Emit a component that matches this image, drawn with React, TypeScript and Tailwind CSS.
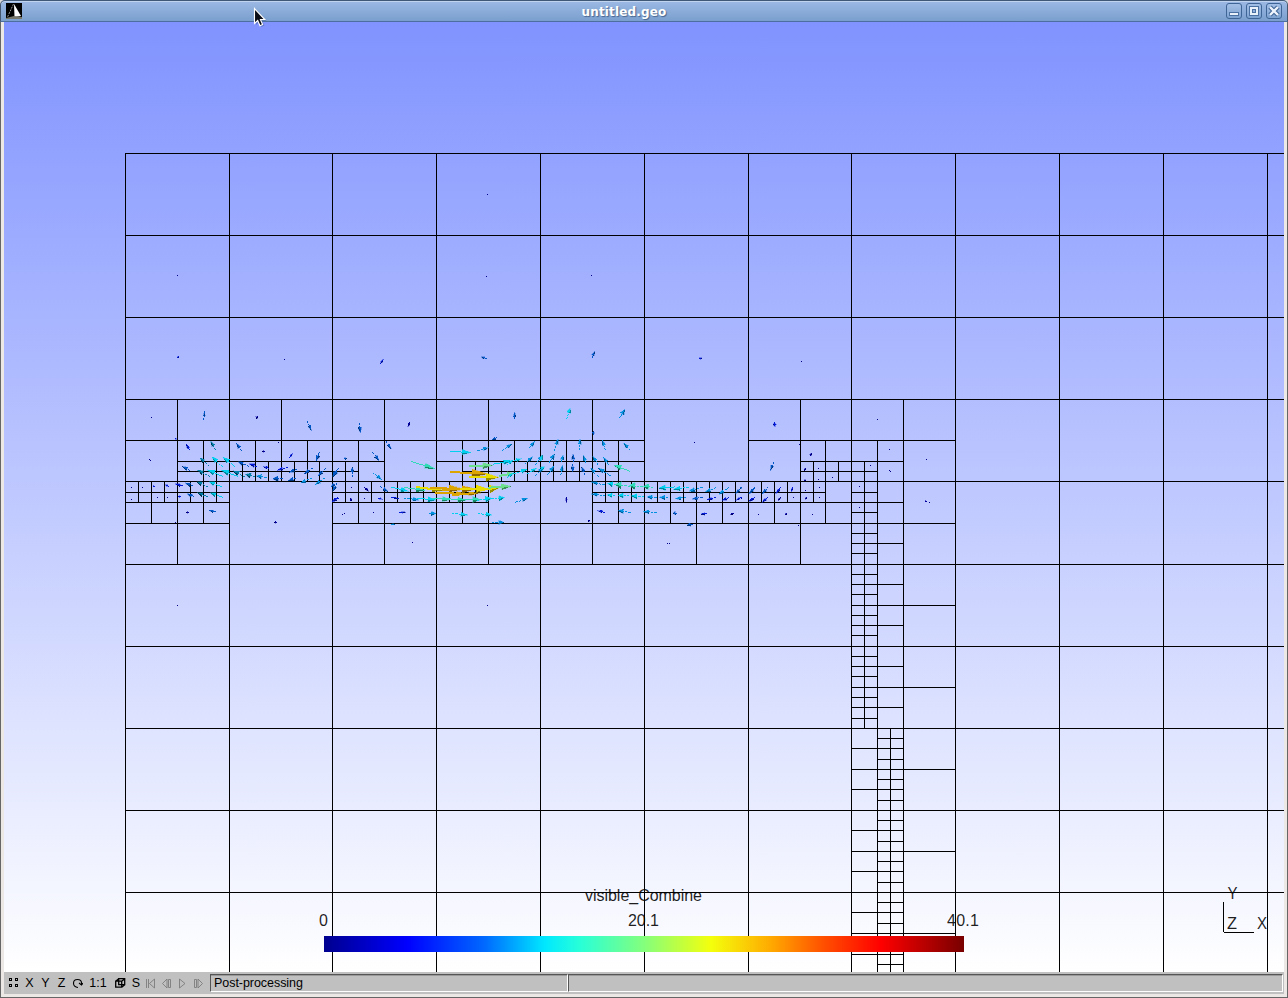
import React from "react";

// Mesh lines: [fixed coordinate, from, to]
const V: number[][] = [
  ...[125, 229, 332, 436, 540, 644, 748, 851, 955, 1059, 1163, 1267].map((x) => [x, 153, 972]),
  [138, 481, 502], [151, 481, 523], [164, 481, 502], [177, 399, 564], [190, 481, 502], [203, 440, 523], [216, 461, 502],
  [242, 461, 481], [255, 440, 481], [268, 461, 481], [281, 399, 481], [294, 461, 481], [307, 440, 481], [319, 461, 481],
  [345, 461, 502], [358, 440, 523], [371, 481, 502], [384, 399, 564], [397, 481, 502], [410, 481, 523], [423, 481, 502],
  [449, 481, 502], [462, 440, 523], [475, 461, 502], [488, 399, 564], [501, 461, 481], [514, 440, 481], [527, 461, 481],
  [553, 461, 481], [566, 440, 481], [579, 461, 481], [592, 399, 564], [605, 461, 502], [618, 440, 523], [631, 481, 502],
  [657, 481, 502], [670, 481, 523], [683, 481, 502], [696, 481, 564], [709, 481, 502], [722, 481, 523], [735, 481, 502],
  [761, 481, 502], [774, 481, 523], [787, 481, 502], [800, 399, 564], [813, 461, 502], [825, 440, 523], [838, 461, 481],
  [864, 461, 728], [877, 440, 972], [890, 728, 972], [903, 399, 972],
];

const H: number[][] = [
  ...[153, 235, 317, 399, 481, 564, 646, 728, 810, 892].map((y) => [y, 125, 1284]),
  [440, 125, 644], [440, 748, 955],
  [461, 177, 384], [461, 436, 644], [461, 800, 903],
  [471, 177, 358], [471, 462, 618], [471, 800, 877],
  [492, 125, 229], [492, 332, 488], [492, 592, 825], [492, 851, 877],
  [502, 125, 229], [502, 332, 488], [502, 592, 903],
  [523, 125, 229], [523, 332, 955],
  ...[512, 533, 553, 574, 594, 615, 635, 656, 676, 697, 718].map((y) => [y, 851, 877]),
  ...[543, 584, 625, 666, 707, 748, 789, 830, 871, 912, 954].map((y) => [y, 851, 903]),
  ...[605, 687].map((y) => [y, 851, 955]),
  ...[769, 851, 933].map((y) => [y, 851, 955]),
  ...[738, 759, 779, 800, 820, 841, 861, 882, 902, 923, 943, 964].map((y) => [y, 877, 903]),
];

const meshPath =
  V.map(([x, a, b]) => `M${x} ${a}h1v${b - a + 1}h-1z`).join("") +
  H.map(([y, a, b]) => `M${a} ${y}h${b - a + 1}v1h${a - b - 1}z`).join("");

const COLORS = ["#00009c", "#0018d8", "#0058c8", "#0090e0", "#00d0f0", "#30dcb8", "#6ce08c", "#e8dc00", "#dca400", "#0080a8"];
const SHADES = ["#000060", "#001080", "#003880", "#005c98", "#00889c", "#168868", "#3c9058", "#988c00", "#8c6400", "#003c58"];

// Vector glyphs in thirds of a pixel: tail x, tail y, tip x, tip y, colour, head half-width
type Tile = { x: number; y: number; glyphs: number[][] };
const TILES: Tile[] = [
  {
    x: 120, y: 390,
    glyphs: [
      [251, 90, 254, 62, 2, 2], [562, 94, 574, 122, 2, 3], [209, 180, 198, 162, 1, 3], [287, 179, 272, 153, 9, 4],
      [365, 182, 349, 160, 2, 4], [508, 204, 518, 189, 1, 2], [598, 187, 589, 213, 2, 4], [268, 229, 239, 203, 9, 4],
      [308, 231, 275, 200, 4, 5], [346, 230, 309, 202, 4, 5], [386, 229, 353, 215, 2, 4], [412, 230, 388, 222, 1, 4],
      [446, 235, 430, 230, 1, 3], [504, 231, 472, 241, 1, 4], [532, 236, 508, 248, 2, 4], [578, 234, 552, 252, 2, 4],
      [616, 235, 594, 258, 2, 4], [650, 240, 638, 260, 2, 4], [210, 242, 187, 229, 2, 4], [270, 260, 232, 240, 9, 5],
      [310, 260, 262, 240, 4, 6], [355, 260, 304, 241, 4, 6], [376, 262, 340, 243, 9, 6], [406, 261, 376, 253, 9, 6],
      [440, 262, 408, 258, 3, 5], [488, 265, 458, 267, 2, 6], [528, 264, 504, 272, 2, 4], [576, 264, 542, 279, 3, 4],
      [614, 264, 586, 284, 3, 4], [652, 278, 638, 305, 2, 4], [188, 288, 165, 282, 1, 3], [220, 289, 196, 279, 2, 4],
      [264, 290, 230, 276, 9, 5], [305, 290, 266, 275, 4, 5], [223, 320, 201, 312, 2, 4], [263, 320, 232, 308, 9, 5],
      [308, 322, 270, 308, 4, 5], [184, 320, 173, 319, 1, 2], [287, 366, 266, 361, 2, 3], [146, 289, 136, 285, 1, 2],
      [654, 322, 636, 336, 1, 4], [104, 289, 98, 289, 1, 2], [207, 367, 198, 367, 0, 2], [435, 184, 426, 184, 0, 2],
      [413, 78, 409, 86, 0, 3], [470, 397, 462, 397, 0, 2], [168, 143, 168, 151, 1, 2],
    ],
  },
  {
    x: 330, y: 390,
    glyphs: [
      [88, 99, 91, 128, 2, 4], [241, 95, 233, 112, 0, 2], [554, 88, 554, 66, 2, 3], [167, 153, 184, 178, 2, 3],
      [502, 142, 486, 149, 2, 4], [128, 187, 147, 212, 2, 4], [42, 207, 50, 205, 2, 3], [128, 247, 155, 269, 3, 4],
      [26, 234, 10, 260, 2, 4], [67, 262, 67, 230, 2, 4], [16, 280, 4, 290, 2, 4],
      [243, 214, 316, 237, 5, 6], [360, 184, 423, 188, 4, 6], [442, 182, 476, 173, 3, 4], [516, 181, 546, 162, 3, 4],
      [598, 175, 614, 154, 3, 4], [418, 229, 488, 226, 6, 7], [360, 246, 474, 252, 8, 9], [418, 261, 506, 262, 7, 9],
      [488, 223, 545, 212, 4, 5], [506, 258, 552, 250, 6, 6], [552, 213, 575, 206, 4, 4], [552, 251, 592, 238, 4, 5],
      [584, 222, 608, 200, 3, 4], [616, 224, 638, 196, 3, 5], [530, 226, 550, 210, 4, 3], [592, 252, 620, 234, 4, 4],
      [616, 257, 640, 232, 3, 4], [530, 264, 552, 248, 4, 3],
      [60, 334, 66, 326, 0, 2], [103, 292, 117, 304, 0, 3], [150, 290, 174, 305, 2, 4], [183, 291, 236, 304, 4, 5],
      [222, 292, 286, 302, 5, 6], [258, 291, 342, 302, 7, 6], [300, 293, 400, 298, 8, 8], [336, 299, 440, 297, 8, 8],
      [316, 309, 425, 312, 8, 4], [366, 315, 452, 309, 8, 4], [390, 296, 474, 297, 7, 9], [440, 302, 508, 293, 7, 9],
      [474, 293, 544, 289, 6, 7], [144, 324, 158, 328, 1, 2], [184, 323, 208, 326, 1, 2], [222, 324, 268, 330, 3, 4],
      [262, 325, 318, 330, 4, 6], [306, 324, 360, 329, 5, 6], [350, 326, 408, 331, 5, 6], [396, 328, 452, 329, 5, 7],
      [440, 331, 486, 325, 4, 7], [484, 327, 524, 323, 4, 6], [26, 324, 6, 334, 1, 4], [556, 337, 593, 325, 3, 4],
      [297, 370, 318, 371, 3, 5], [366, 370, 413, 375, 4, 5], [444, 371, 486, 375, 4, 5], [208, 367, 228, 367, 1, 2],
      [486, 398, 522, 397, 3, 5], [184, 403, 195, 403, 3, 2],
    ],
  },
  {
    x: 540, y: 390,
    glyphs: [
      [80, 88, 91, 53, 4, 5], [238, 85, 255, 58, 3, 5], [160, 134, 160, 123, 2, 3], [43, 184, 54, 147, 3, 4],
      [119, 181, 120, 146, 3, 4], [196, 181, 187, 150, 3, 4], [271, 181, 251, 159, 3, 4], [0, 214, 8, 194, 4, 4],
      [26, 220, 44, 192, 3, 5], [64, 216, 70, 194, 3, 4], [100, 216, 99, 192, 2, 4], [138, 220, 130, 196, 3, 4],
      [174, 224, 158, 198, 3, 4], [208, 226, 190, 202, 3, 4], [271, 244, 222, 226, 5, 6], [0, 240, 14, 230, 4, 5],
      [22, 256, 42, 228, 3, 5], [62, 256, 68, 226, 3, 4], [98, 222, 98, 246, 2, 4], [136, 256, 124, 230, 2, 4],
      [176, 260, 152, 234, 3, 4], [214, 259, 174, 234, 3, 5], [194, 285, 154, 276, 3, 4], [238, 287, 202, 280, 4, 6],
      [270, 289, 224, 283, 5, 8], [308, 291, 268, 286, 5, 8], [340, 292, 310, 289, 5, 7], [404, 291, 356, 295, 4, 6],
      [446, 292, 400, 298, 4, 5], [488, 292, 446, 304, 3, 5], [528, 293, 496, 306, 3, 4], [568, 292, 536, 313, 3, 4],
      [606, 292, 586, 312, 2, 3], [644, 294, 628, 312, 2, 3], [196, 317, 154, 312, 3, 4], [226, 317, 200, 315, 4, 5],
      [268, 318, 234, 316, 4, 6], [312, 320, 274, 318, 4, 6], [350, 322, 320, 321, 3, 5], [384, 323, 358, 322, 3, 5],
      [438, 322, 406, 326, 3, 4], [488, 322, 456, 327, 2, 4], [528, 322, 500, 330, 1, 3], [566, 323, 545, 332, 1, 3],
      [606, 321, 586, 332, 1, 2], [644, 322, 630, 334, 1, 2], [194, 367, 172, 362, 1, 3], [272, 367, 234, 362, 3, 5],
      [350, 367, 309, 365, 3, 4], [411, 369, 398, 370, 2, 4], [501, 371, 482, 373, 1, 3], [582, 371, 570, 373, 0, 2],
      [458, 402, 440, 406, 2, 4], [79, 320, 79, 338, 0, 2], [144, 391, 150, 394, 0, 2],
    ],
  },
  {
    x: 740, y: 390,
    glyphs: [
      [103, 96, 104, 110, 1, 4], [101, 216, 91, 242, 2, 3], [214, 189, 211, 198, 0, 3], [46, 291, 26, 312, 2, 3],
      [86, 290, 66, 312, 2, 3], [124, 290, 107, 312, 1, 3], [160, 290, 153, 306, 1, 2], [84, 321, 66, 338, 1, 3],
      [44, 322, 26, 334, 1, 3], [122, 321, 114, 332, 0, 2], [199, 322, 196, 328, 0, 2], [4, 291, 0, 296, 2, 2],
      [141, 370, 135, 375, 0, 2], [555, 334, 561, 335, 0, 2], [197, 234, 192, 243, 0, 2], [192, 271, 198, 271, 0, 2],
    ],
  },
  {
    x: 0, y: 0,
    glyphs: [
      [533, 1074, 536, 1069, 1, 2], [1139, 1093, 1151, 1077, 1, 2], [1460, 1076, 1442, 1070, 2, 3],
      [1776, 1073, 1785, 1053, 2, 3], [2096, 1075, 2107, 1075, 1, 2],
    ],
  },
];

// Vectors too short to show a direction
const DOTS: number[][] = [
  [487, 194], [177, 275], [486, 276], [591, 275], [284, 359], [801, 361], [151, 417], [149, 459], [150, 460], [278, 442],
  [131, 487], [142, 487], [131, 499], [157, 497], [167, 497], [175, 522], [177, 605], [487, 605], [412, 542], [342, 514],
  [344, 513], [373, 512], [351, 487], [364, 498], [350, 498], [694, 442], [667, 543], [669, 543], [758, 514], [812, 514],
  [799, 444], [877, 419], [889, 449], [889, 470], [890, 471], [926, 459], [929, 502], [832, 477], [870, 465], [859, 486],
  [859, 507], [798, 525], [818, 468], [818, 479], [819, 487], [819, 497], [805, 490], [793, 497], [780, 497], [741, 498],
];

function Glyph({ g }: { g: number[] }) {
  const [x1, y1, x2, y2, c, half] = g;
  const w = half * 1.25 + 0.4;
  const dx = x2 - x1;
  const dy = y2 - y1;
  const len = Math.hypot(dx, dy) || 1;
  const ux = dx / len;
  const uy = dy / len;
  const head = Math.min(len * 0.65, Math.max(len * 0.42, 16));
  const bx = x2 - ux * head;
  const by = y2 - uy * head;
  // Unit normal turned to the lower, unlit side of the cone
  const side = ux >= 0 ? 1 : -1;
  const nx = -uy * w * side;
  const ny = ux * w * side;
  const strong = c >= 6 && c <= 8;
  return (
    <g>
      <path
        d={`M${x1} ${y1}L${bx} ${by}`}
        stroke={COLORS[c]}
        strokeWidth={strong ? 6 : 3}
        strokeDasharray={len < 48 && !strong ? "7 3" : undefined}
      />
      <path d={`M${bx + nx} ${by + ny}L${x2} ${y2}L${bx - nx} ${by - ny}z`} fill={COLORS[c]} stroke={COLORS[c]} strokeWidth="1" />
      <path d={`M${bx + nx * 0.3} ${by + ny * 0.3}L${x2} ${y2}L${bx + nx} ${by + ny}z`} fill={SHADES[c]} />
    </g>
  );
}

function Viewport() {
  return (
    <svg
      className="block h-[950px] w-[1280px] shrink-0"
      viewBox="4 22 1280 950"
      fontFamily="'Liberation Sans', Arial, sans-serif"
      fontSize="16"
    >
      <defs>
        <linearGradient id="sky" x1="0" y1="0" x2="0" y2="1">
          <stop offset="0" stopColor="#8093ff" />
          <stop offset="1" stopColor="#ffffff" />
        </linearGradient>
        <linearGradient id="jet">
          <stop offset="0" stopColor="#00008f" />
          <stop offset=".13" stopColor="#0000ff" />
          <stop offset=".25" stopColor="#0068ff" />
          <stop offset=".345" stopColor="#00e8ff" />
          <stop offset=".4" stopColor="#28ffd8" />
          <stop offset=".5" stopColor="#84ff7c" />
          <stop offset=".605" stopColor="#f4ff0c" />
          <stop offset=".7" stopColor="#ffa800" />
          <stop offset=".78" stopColor="#ff5000" />
          <stop offset=".87" stopColor="#ff0000" />
          <stop offset="1" stopColor="#780000" />
        </linearGradient>
      </defs>
      <rect x="4" y="22" width="1280" height="950" fill="url(#sky)" />
      <g shapeRendering="crispEdges">
        <path d={meshPath} fill="#000000" />
        {TILES.map((t, i) => (
          <g key={i} transform={`translate(${t.x} ${t.y}) scale(.33333)`} fill="none">
            {t.glyphs.map((g, j) => (
              <Glyph key={j} g={g} />
            ))}
          </g>
        ))}
        <path d={DOTS.map(([x, y]) => `M${x} ${y}h1v1h-1z`).join("")} fill="#000088" />
        <rect x="324" y="936" width="640" height="16" fill="url(#jet)" />
        <path d="M1223 902h1v30h-1zM1224 932h30v1h-30z" fill="#000" />
      </g>
      <g fill="#000" fillOpacity=".88">
        <text x="585" y="901" textLength="117">visible_Combine</text>
        <text x="319" y="926">0</text>
        <text x="628" y="926" textLength="31">20.1</text>
        <text x="947" y="926" textLength="32">40.1</text>
        <text x="1227.500" y="899" textLength="10" lengthAdjust="spacingAndGlyphs">Y</text>
        <text x="1227" y="929" textLength="10" lengthAdjust="spacingAndGlyphs">Z</text>
        <text x="1257" y="929" textLength="10" lengthAdjust="spacingAndGlyphs">X</text>
      </g>
    </svg>
  );
}

function WindowButton({ children }: { children: React.ReactNode }) {
  return (
    <button className="flex h-4 w-4 items-center justify-center rounded-[3px] border border-[#3f6596] bg-linear-to-b from-[#a3bfe6] to-[#7da2d0]">
      <svg width="14" height="14" viewBox="0 0 14 14" fill="none" shapeRendering="crispEdges">
        {children}
      </svg>
    </button>
  );
}

function TitleBar() {
  return (
    <header className="relative flex h-[22px] shrink-0 items-center justify-between rounded-t-[5px] border border-b-[#4c6f9f] border-x-[#46586f] border-t-[#3f5878] bg-linear-to-b from-[#9cb9e4] to-[#7a9fce] px-[5px] shadow-[inset_0_1px_0_#c0d4f0]">
      <svg width="16" height="16" viewBox="0 0 16 16">
        <path d="M0 0h16v16H0z" fill="#000" />
        <path d="M8 1L15 13L8.500 14z" fill="#fff" />
        <path d="M0 15L8 13L16 14V16H0z" fill="#77776c" />
        <path d="M7.500 1L1.500 14" stroke="#999" strokeDasharray="2 1" fill="none" />
      </svg>
      <h1 className="absolute inset-x-0 top-[3px] pr-[40px] text-center font-['DejaVu_Sans',sans-serif] text-[12px] leading-4 font-bold tracking-[0.17px] text-white [text-shadow:1px_1px_1px_#47658f]">
        untitled.geo
      </h1>
      <div className="relative flex gap-1">
        <WindowButton>
          <path d="M2 8h10v4H2z" fill="#4b71a3" />
          <path d="M3 9h8v2H3z" fill="#e8f0fa" />
        </WindowButton>
        <WindowButton>
          <path d="M2 2h10v10H2z" fill="#4b71a3" />
          <path d="M3 3h8v8H3z" fill="#e8f0fa" />
          <path d="M5 5h4v4H5z" fill="#4b71a3" />
          <path d="M6 6h2v2H6z" fill="#8fb0dc" />
        </WindowButton>
        <WindowButton>
          <path d="M3 3l8 8M11 3l-8 8" stroke="#3f6596" strokeWidth="4.500" shapeRendering="auto" />
          <path d="M3 3l8 8M11 3l-8 8" stroke="#eef4fc" strokeWidth="2.400" shapeRendering="auto" />
        </WindowButton>
      </div>
      <svg className="absolute top-[6px] left-[252px]" width="16" height="22" viewBox="0 0 16 22">
        <path d="M3 3v15l3-3 2.500 5 3-1.500L9 14h4.500z" fill="#324a70" opacity=".35" />
        <path d="M1.500 1.500v15l3.200-3 2.300 5.200 2.600-1.200L7.400 12.500h4.400z" fill="#0a0c16" stroke="#fff" strokeWidth="1.100" />
      </svg>
    </header>
  );
}

const PLAYBACK = [
  "M1.500 1v9M3.500 1v9M9.500 1v9L4.500 5.500z",
  "M6 1v9L1.500 5.500zM7.500 1.500h2v8h-2z",
  "M2.500 1v9L8 5.500z",
  "M1.500 1.500h2v8h-2zM5 1v9l4.500-4.500z",
];

function StatusBar() {
  return (
    <footer className="flex h-[22px] w-[1280px] shrink-0 items-center bg-[#c0c0c0] font-['Liberation_Sans',Arial,sans-serif] text-[12.500px] leading-4 text-black">
      <div className="flex w-[206px] shrink-0 items-center pl-[1.500px] [&>*]:flex [&>*]:w-4 [&>*]:shrink-0 [&>*]:items-center [&>*]:justify-center">
        <span>
          <svg width="10" height="10" viewBox="0 0 10 10" fill="none" stroke="#000" shapeRendering="crispEdges">
            <path d="M.5.500h2v2h-2zM6.500.500h2v2h-2zM.5 6.500h2v2h-2zM6.500 6.500h2v2h-2z" />
          </svg>
        </span>
        <span>X</span>
        <span>Y</span>
        <span>Z</span>
        <span>
          <svg width="11" height="11" viewBox="0 0 11 11" fill="none" stroke="#000" strokeWidth="1.100">
            <path d="M6 9.500C3 9.500 1.500 7.500 1.500 5.300 1.500 3 3.200 1.500 5.500 1.500s4 1.500 4 3.500V7" />
            <path d="M7 5l2.500 2L11 5" />
          </svg>
        </span>
        <span className="!w-[25px]">1:1</span>
        <span className="!w-[19px]">
          <svg width="11" height="10" viewBox="0 0 11 10" fill="none" stroke="#000" strokeWidth="1.300">
            <path d="M.7 3.200h6v6h-6zM3.700.700h6v6h-6zM.7 3.200L3.700.700M6.700 9.200l3-2.500M6.700 3.200L9.700.700" />
          </svg>
        </span>
        <span className="!w-[13px]">S</span>
        {PLAYBACK.map((d) => (
          <span key={d}>
            <svg width="11" height="11" viewBox="0 0 11 11" fill="none" stroke="#7c7c7c" strokeWidth=".9">
              <path d={d} />
            </svg>
          </span>
        ))}
      </div>
      <div className="mb-[1px] flex h-[18px] w-[358px] shrink-0 items-center border border-b-white border-l-[#555] border-r-white border-t-[#555] pl-[3px] shadow-[inset_0_1px_0_#999]">
        <span className="tracking-[-0.05px]">Post-processing</span>
      </div>
      <div className="mb-[1px] h-[18px] w-[715px] shrink-0 border border-b-white border-l-[#555] border-r-white border-t-[#555] shadow-[inset_0_1px_0_#999]" />
    </footer>
  );
}

export default function App() {
  return (
    <main className="flex h-[998px] w-[1288px] flex-col overflow-hidden bg-[#dcdcdc]">
      <TitleBar />
      <div className="flex h-[976px] flex-col border-x border-b border-[#666] bg-[#ebe8e5] pl-[3px]">
        <Viewport />
        <StatusBar />
      </div>
    </main>
  );
}
